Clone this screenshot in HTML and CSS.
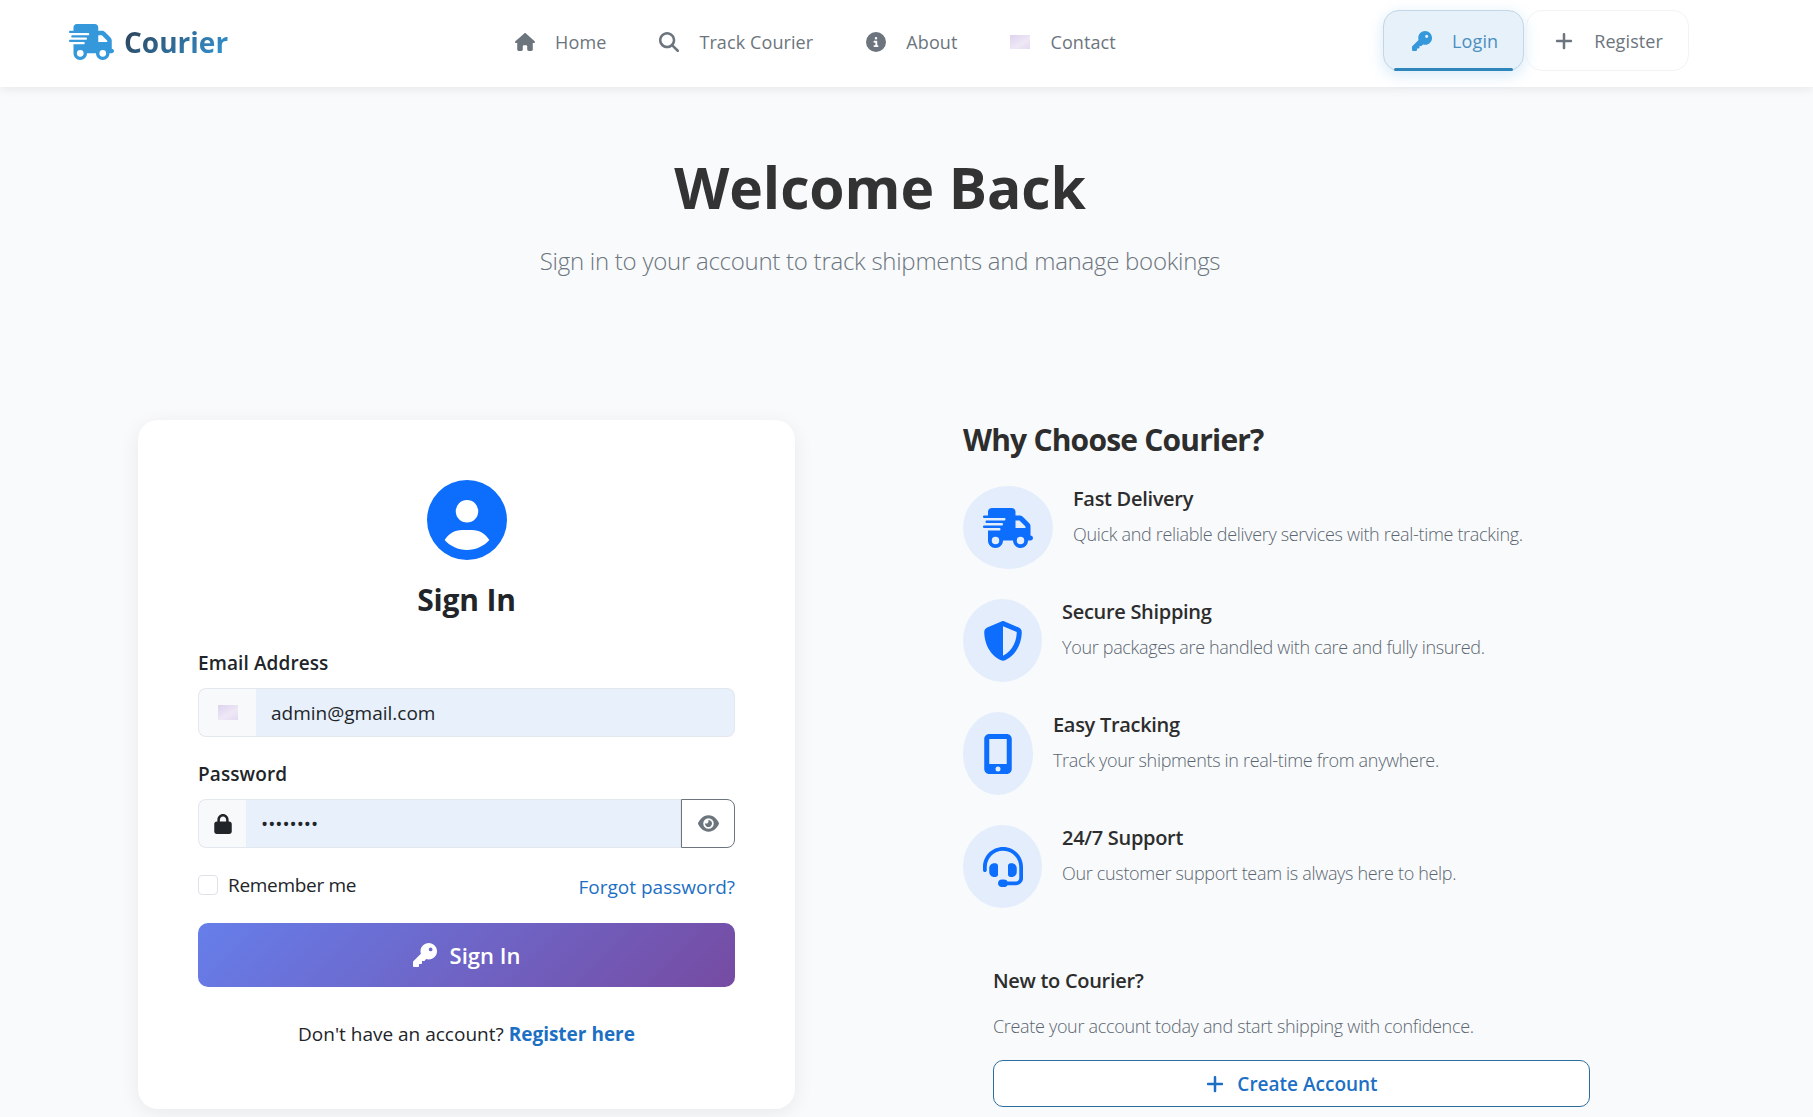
FILE: index.html
```html
<!DOCTYPE html>
<html lang="en">

<head>
    <meta charset="UTF-8">
    <meta name="viewport" content="width=device-width, initial-scale=1.0">
    <title>Courier - Login</title>
    <link rel="stylesheet" href="styles.css">
</head>

<body>

    <svg class="icon-defs" aria-hidden="true">
        <symbol id="i-truck" viewBox="0 0 640 512"><path d="M112 0C85.5 0 64 21.5 64 48V96H16c-8.8 0-16 7.2-16 16s7.2 16 16 16H64 272c8.8 0 16 7.2 16 16s-7.2 16-16 16H64 48c-8.8 0-16 7.2-16 16s7.2 16 16 16H64 240c8.8 0 16 7.2 16 16s-7.2 16-16 16H64 16c-8.8 0-16 7.2-16 16s7.2 16 16 16H64 208c8.8 0 16 7.2 16 16s-7.2 16-16 16H64V416c0 53 43 96 96 96s96-43 96-96H384c0 53 43 96 96 96s96-43 96-96h32c17.7 0 32-14.3 32-32s-14.3-32-32-32V288 256 237.3c0-17-6.7-33.3-18.7-45.3L512 114.7c-12-12-28.3-18.7-45.3-18.7H416V48c0-26.5-21.5-48-48-48H112zM544 237.3V256H416V160h50.7L544 237.3zM160 368a48 48 0 1 1 0 96 48 48 0 1 1 0-96zm272 48a48 48 0 1 1 96 0 48 48 0 1 1 -96 0z"/></symbol>
        <symbol id="i-home" viewBox="0 0 576 512"><path d="M575.8 255.5c0 18-15 32.1-32 32.1h-32l.7 160.2c0 2.7-.2 5.4-.5 8.1V472c0 22.1-17.9 40-40 40H456c-1.1 0-2.2 0-3.3-.1c-1.4 .1-2.8 .1-4.2 .1H416 392c-22.1 0-40-17.9-40-40V448 384c0-17.7-14.3-32-32-32H256c-17.7 0-32 14.3-32 32v64 24c0 22.1-17.9 40-40 40H160 128.1c-1.5 0-3-.1-4.5-.2c-1.2 .1-2.4 .2-3.6 .2H104c-22.1 0-40-17.9-40-40V360c0-.9 0-1.9 .1-2.8V287.6H32c-18 0-32-14-32-32.1c0-9 3-17 10-24L266.4 8c7-7 15-8 22-8s15 2 21 7L564.8 231.5c8 7 12 15 11 24z"/></symbol>
        <symbol id="i-search" viewBox="0 0 512 512"><path d="M416 208c0 45.9-14.9 88.3-40 122.7L502.6 457.4c12.5 12.5 12.5 32.8 0 45.3s-32.8 12.5-45.3 0L330.7 376c-34.4 25.2-76.8 40-122.7 40C93.1 416 0 322.9 0 208S93.1 0 208 0S416 93.1 416 208zM208 352a144 144 0 1 0 0-288 144 144 0 1 0 0 288z"/></symbol>
        <symbol id="i-info" viewBox="0 0 512 512"><path d="M256 512A256 256 0 1 0 256 0a256 256 0 1 0 0 512zM216 336h24V272H216c-13.3 0-24-10.7-24-24s10.7-24 24-24h48c13.3 0 24 10.7 24 24v88h8c13.3 0 24 10.7 24 24s-10.7 24-24 24H216c-13.3 0-24-10.7-24-24s10.7-24 24-24zm40-208a32 32 0 1 1 0 64 32 32 0 1 1 0-64z"/></symbol>
        <symbol id="i-key" viewBox="0 0 512 512"><path d="M336 352c97.2 0 176-78.8 176-176S433.2 0 336 0S160 78.8 160 176c0 18.7 2.9 36.8 8.3 53.7L7 391c-4.5 4.5-7 10.6-7 17v80c0 13.3 10.7 24 24 24h80c13.3 0 24-10.7 24-24V448h40c13.3 0 24-10.7 24-24V384h40c6.4 0 12.5-2.5 17-7l33.3-33.3c16.9 5.4 35 8.3 53.7 8.3zM376 96a40 40 0 1 1 0 80 40 40 0 1 1 0-80z"/></symbol>
        <symbol id="i-plus" viewBox="0 0 448 512"><path d="M256 80c0-17.7-14.3-32-32-32s-32 14.3-32 32V224H48c-17.7 0-32 14.3-32 32s14.3 32 32 32H192V432c0 17.7 14.3 32 32 32s32-14.3 32-32V288H400c17.7 0 32-14.3 32-32s-14.3-32-32-32H256V80z"/></symbol>
        <symbol id="i-user" viewBox="0 0 512 512"><path d="M399 384.2C376.9 345.8 335.4 320 288 320H224c-47.4 0-88.9 25.8-111 64.2c35.2 39.2 86.2 63.8 143 63.8s107.8-24.7 143-63.8zM0 256a256 256 0 1 1 512 0A256 256 0 1 1 0 256zm256 16a72 72 0 1 0 0-144 72 72 0 1 0 0 144z"/></symbol>
        <symbol id="i-shield" viewBox="0 0 512 512"><path d="M256 0c4.6 0 9.2 1 13.4 2.9L457.7 82.8c22 9.3 38.4 31 38.3 57.2c-.5 99.2-41.3 280.7-213.6 363.2c-16.7 8-36.1 8-52.8 0C57.3 420.7 16.5 239.2 16 140c-.1-26.2 16.3-47.9 38.3-57.2L242.7 2.9C246.8 1 251.4 0 256 0zm0 66.8V444.8C394 378 431.1 230.1 432 141.4L256 66.8l0 0z"/></symbol>
        <symbol id="i-mobile" viewBox="0 0 384 512"><path d="M16 64C16 28.7 44.7 0 80 0H304c35.3 0 64 28.7 64 64V448c0 35.3-28.7 64-64 64H80c-35.3 0-64-28.7-64-64V64zM224 448a32 32 0 1 0 -64 0 32 32 0 1 0 64 0zM304 64H80V384H304V64z"/></symbol>
        <symbol id="i-headset" viewBox="0 0 512 512"><path d="M256 48C141.1 48 48 141.1 48 256v40c0 13.3-10.7 24-24 24s-24-10.7-24-24V256C0 114.6 114.6 0 256 0S512 114.6 512 256V400.1c0 48.6-39.4 88-88.1 88L313.6 488c-8.3 14.3-23.8 24-41.6 24H240c-26.5 0-48-21.5-48-48s21.5-48 48-48h32c17.8 0 33.3 9.7 41.6 24l110.4 .1c22.1 0 40-17.9 40-40V256c0-114.9-93.1-208-208-208zM144 208h16c17.7 0 32 14.3 32 32V352c0 17.7-14.3 32-32 32H144c-35.3 0-64-28.7-64-64V272c0-35.3 28.7-64 64-64zm224 0c35.3 0 64 28.7 64 64v48c0 35.3-28.7 64-64 64H352c-17.7 0-32-14.3-32-32V240c0-17.7 14.3-32 32-32h16z"/></symbol>
        <symbol id="i-lock" viewBox="0 0 448 512"><path d="M144 144v48H304V144c0-44.2-35.8-80-80-80s-80 35.8-80 80zM80 192V144C80 64.5 144.5 0 224 0s144 64.5 144 144v48h16c35.3 0 64 28.7 64 64V448c0 35.3-28.7 64-64 64H64c-35.3 0-64-28.7-64-64V256c0-35.3 28.7-64 64-64H80z"/></symbol>
        <symbol id="i-eye" viewBox="0 0 576 512"><path d="M288 32c-80.8 0-145.5 36.8-192.6 80.6C48.6 156 17.3 208 2.5 243.7c-3.3 7.9-3.3 16.7 0 24.6C17.3 304 48.6 356 95.4 399.4C142.5 443.2 207.2 480 288 480s145.5-36.8 192.6-80.6c46.8-43.5 78.1-95.4 93-131.1c3.3-7.9 3.3-16.7 0-24.6c-14.9-35.7-46.2-87.7-93-131.1C433.5 68.8 368.8 32 288 32zM144 256a144 144 0 1 1 288 0 144 144 0 1 1 -288 0zm144-64c0 35.3-28.7 64-64 64c-7.1 0-13.9-1.2-20.3-3.3c-5.5-1.8-11.9 1.6-11.7 7.4c.3 6.9 1.3 13.8 3.2 20.7c13.7 51.2 66.4 81.6 117.6 67.9s81.6-66.4 67.9-117.6c-11.1-41.5-47.8-69.4-88.6-71.1c-5.8-.2-9.2 6.1-7.4 11.7c2.1 6.4 3.3 13.2 3.3 20.3z"/></symbol>
    </svg>

    <nav>
        <a href="#" class="logo">
            <svg class="logo-icon"><use href="#i-truck"/></svg>
            <span class="logo-text">Courier</span>
        </a>

        <div class="main-links">
            <a href="#" class="nav-link"><svg class="nav-icon"><use href="#i-home"/></svg>Home</a>
            <a href="#" class="nav-link"><svg class="nav-icon"><use href="#i-search"/></svg>Track Courier</a>
            <a href="#" class="nav-link"><svg class="nav-icon"><use href="#i-info"/></svg>About</a>
            <a href="#" class="nav-link"><span class="mail-glyph"></span>Contact</a>
        </div>

        <div class="auth-links">
            <a href="#" class="auth-link active"><svg class="nav-icon"><use href="#i-key"/></svg>Login</a>
            <a href="#" class="auth-link"><svg class="nav-icon"><use href="#i-plus"/></svg>Register</a>
        </div>
    </nav>

    <main>
        <div class="hero">
            <h1>Welcome Back</h1>
            <p>Sign in to your account to track shipments and manage bookings</p>
        </div>

        <div class="columns">
            <form class="login-card">
                <svg class="avatar"><use href="#i-user"/></svg>
                <h2>Sign In</h2>

                <label class="field-label" for="email">Email Address</label>
                <div class="input-group">
                    <span class="input-addon email-addon"><span class="mail-glyph small"></span></span>
                    <input id="email" type="text" value="admin@gmail.com">
                </div>

                <label class="field-label" for="password">Password</label>
                <div class="input-group">
                    <span class="input-addon"><svg class="lock-icon"><use href="#i-lock"/></svg></span>
                    <input id="password" class="password-input" type="password" value="password">
                    <button type="button" class="eye-btn"><svg class="eye-icon"><use href="#i-eye"/></svg></button>
                </div>

                <div class="form-options">
                    <label class="remember"><input type="checkbox"><span>Remember me</span></label>
                    <a href="#" class="forgot">Forgot password?</a>
                </div>

                <button type="button" class="signin-btn"><svg class="signin-icon"><use href="#i-key"/></svg>Sign In</button>

                <p class="register-line">Don't have an account? <a href="#">Register here</a></p>
            </form>

            <section class="why">
                <h3>Why Choose Courier?</h3>

                <div class="feature">
                    <div class="feature-circle w90"><svg class="truck-icon"><use href="#i-truck"/></svg></div>
                    <div>
                        <h5>Fast Delivery</h5>
                        <p>Quick and reliable delivery services with real-time tracking.</p>
                    </div>
                </div>

                <div class="feature">
                    <div class="feature-circle w79"><svg class="feature-icon"><use href="#i-shield"/></svg></div>
                    <div>
                        <h5>Secure Shipping</h5>
                        <p>Your packages are handled with care and fully insured.</p>
                    </div>
                </div>

                <div class="feature">
                    <div class="feature-circle w70"><svg class="feature-icon"><use href="#i-mobile"/></svg></div>
                    <div>
                        <h5>Easy Tracking</h5>
                        <p>Track your shipments in real-time from anywhere.</p>
                    </div>
                </div>

                <div class="feature">
                    <div class="feature-circle w79"><svg class="feature-icon"><use href="#i-headset"/></svg></div>
                    <div>
                        <h5>24/7 Support</h5>
                        <p>Our customer support team is always here to help.</p>
                    </div>
                </div>

                <div class="new-box">
                    <h5>New to Courier?</h5>
                    <p>Create your account today and start shipping with confidence.</p>
                    <a href="#" class="create-btn"><svg class="create-icon"><use href="#i-plus"/></svg>Create Account</a>
                </div>
            </section>
        </div>
    </main>

</body>

</html>
```

FILE: styles.css
```css
* {
    margin: 0;
    padding: 0;
    box-sizing: border-box;
}

html,
body {
    height: 100%;
    overflow: hidden;
}

body {
    background-color: #f8fafc;
    color: #212529;
    font-family: "Open Sans", "Noto Sans", sans-serif;
}

a {
    text-decoration: none;
}

.icon-defs {
    display: none;
}

/* navbar */
nav {
    height: 87px;
    display: flex;
    align-items: flex-start;
    padding: 10px 124px 0 69px;
    background-color: white;
    box-shadow: 0 2px 10px rgba(0, 0, 0, 0.08);
}

.logo {
    display: flex;
    align-items: center;
    height: 64px;
    gap: 10px;
}

.logo-icon {
    width: 45px;
    height: 36px;
    fill: #3498db;
}

.logo-text {
    font-size: 28px;
    font-weight: 700;
    background: linear-gradient(135deg, #2c3e50, #3498db);
    -webkit-background-clip: text;
    background-clip: text;
    color: transparent;
}

.main-links {
    display: flex;
    gap: 53px;
    margin-left: 287px;
}

.nav-link {
    display: flex;
    align-items: center;
    height: 64px;
    gap: 20px;
    color: #6c757d;
    font-size: 18px;
    font-weight: 500;
    letter-spacing: 0.1px;
}

.nav-icon {
    width: 20px;
    height: 20px;
    fill: currentColor;
}

.mail-glyph {
    display: block;
    width: 20px;
    height: 14px;
    background: linear-gradient(150deg, #ded2ee, #eee8f6 60%, #e4daf0);
}

.mail-glyph.small {
    height: 15px;
}

.auth-links {
    display: flex;
    gap: 2px;
    margin-left: auto;
}

.auth-link {
    position: relative;
    display: flex;
    align-items: center;
    height: 61px;
    gap: 20px;
    padding: 0 25px 0 27px;
    border: 1px solid #f1f3f5;
    border-radius: 16px;
    color: #6c757d;
    font-size: 18px;
    font-weight: 500;
    letter-spacing: 0.1px;
}

.auth-link.active {
    padding: 0 25px 0 28px;
    background-color: #e6f1fa;
    border-color: #c3d6e5;
    color: #4b8fbf;
    box-shadow: 0 4px 15px rgba(52, 152, 219, 0.2);
}

.auth-link.active .nav-icon {
    fill: #3498db;
}

/* bar under the active link */
.auth-link.active::after {
    content: "";
    position: absolute;
    left: 10px;
    right: 10px;
    bottom: -1px;
    height: 3px;
    border-radius: 2px;
    background-color: #2f86bd;
}

/* page */
main {
    padding: 0 191px 0 138px;
}

.hero {
    padding-top: 67px;
    text-align: center;
}

.hero h1 {
    font-size: 57px;
    line-height: 67px;
    font-weight: 700;
    color: #333;
    letter-spacing: -0.1px;
}

.hero p {
    margin-top: 23px;
    font-size: 24px;
    line-height: 34px;
    font-weight: 300;
    color: #6c757d;
    letter-spacing: -0.26px;
}

.columns {
    display: grid;
    grid-template-columns: 657px 657px;
    gap: 168px;
    margin-top: 142px;
}

/* login card */
.login-card {
    height: 689px;
    padding: 60px;
    background-color: white;
    border-radius: 20px;
    box-shadow: 0 4px 20px rgba(0, 0, 0, 0.07);
}

.avatar {
    display: block;
    width: 80px;
    height: 80px;
    margin: 0 auto;
    fill: #0d6efd;
}

.login-card h2 {
    margin-top: 19px;
    margin-bottom: 29px;
    text-align: center;
    font-size: 30px;
    line-height: 42px;
    font-weight: 700;
    letter-spacing: -0.2px;
}

.field-label {
    display: block;
    margin-bottom: 12px;
    font-size: 19px;
    line-height: 26px;
    font-weight: 600;
    letter-spacing: 0.1px;
}

.input-group {
    display: flex;
    height: 49px;
    margin-bottom: 24px;
}

.input-addon {
    display: flex;
    align-items: center;
    justify-content: center;
    width: 48px;
    flex-shrink: 0;
    background-color: #f8f9fa;
    border: 1px solid #e3e8ee;
    border-right: none;
    border-radius: 8px 0 0 8px;
}

.email-addon {
    width: 58px;
}

.lock-icon {
    width: 18px;
    height: 20px;
    fill: #212529;
}

.input-group input {
    flex: 1;
    min-width: 0;
    padding: 0 15px;
    border: 1px solid #e3e8ee;
    border-left: none;
    outline: none;
    background-color: #e8f0fb;
    color: #212529;
    font-family: inherit;
    font-size: 19px;
}

.input-group input:last-child {
    border-radius: 0 8px 8px 0;
}

.eye-btn {
    display: flex;
    align-items: center;
    justify-content: center;
    width: 54px;
    flex-shrink: 0;
    background-color: white;
    border: 1px solid #6c757d;
    border-radius: 0 8px 8px 0;
}

.eye-icon {
    width: 21px;
    height: 19px;
    fill: #6c757d;
}

.form-options {
    display: flex;
    justify-content: space-between;
    align-items: center;
    height: 26px;
}

.remember {
    display: flex;
    align-items: center;
    gap: 10px;
    font-size: 19px;
    letter-spacing: -0.3px;
    color: #212529;
}

.remember input {
    appearance: none;
    width: 20px;
    height: 20px;
    background-color: white;
    border: 1px solid #dee2e6;
    border-radius: 4px;
}

.forgot {
    padding-top: 4px;
    color: #1d6fc4;
    font-size: 19px;
}

.signin-btn {
    display: flex;
    align-items: center;
    justify-content: center;
    gap: 13px;
    width: 100%;
    height: 64px;
    margin-top: 25px;
    border: none;
    border-radius: 10px;
    background: linear-gradient(135deg, #667eea, #764ba2);
    color: white;
    font-family: inherit;
    font-size: 22px;
    font-weight: 600;
}

.signin-icon {
    width: 24px;
    height: 24px;
    fill: white;
}

.register-line {
    margin-top: 34px;
    text-align: center;
    font-size: 19px;
    line-height: 26px;
}

.register-line a {
    color: #1d6fc4;
    font-weight: 700;
}

/* right column */
.why h3 {
    margin-bottom: 27px;
    font-size: 30px;
    line-height: 39px;
    font-weight: 700;
    color: #2d2d2d;
    letter-spacing: -0.8px;
}

.feature {
    display: flex;
    gap: 20px;
    height: 83px;
    margin-bottom: 30px;
}

.feature-circle {
    display: flex;
    align-items: center;
    justify-content: center;
    height: 83px;
    flex-shrink: 0;
    background-color: #e3edfb;
    border-radius: 50%;
}

.w90 {
    width: 90px;
}

.w79 {
    width: 79px;
}

.w70 {
    width: 70px;
}

.truck-icon {
    width: 50px;
    height: 40px;
    fill: #0d6efd;
}

.feature-icon {
    width: 40px;
    height: 40px;
    fill: #0d6efd;
}

.feature h5,
.new-box h5 {
    font-size: 20px;
    line-height: 25px;
    font-weight: 600;
    color: #2d2d2d;
    letter-spacing: -0.3px;
}

.feature p,
.new-box p {
    margin-top: 10px;
    font-size: 18px;
    line-height: 26px;
    font-weight: 300;
    color: #5c6670;
    letter-spacing: -0.32px;
}

.new-box {
    padding: 30px 30px 0;
}

.new-box p {
    margin-top: 20px;
}

.create-btn {
    display: flex;
    align-items: center;
    justify-content: center;
    gap: 12px;
    height: 47px;
    margin-top: 21px;
    background-color: white;
    border: 1px solid #2c6e9e;
    border-radius: 10px;
    color: #1d6fc4;
    font-size: 19px;
    font-weight: 600;
}

.create-icon {
    width: 20px;
    height: 20px;
    fill: #1d6fc4;
}
```
